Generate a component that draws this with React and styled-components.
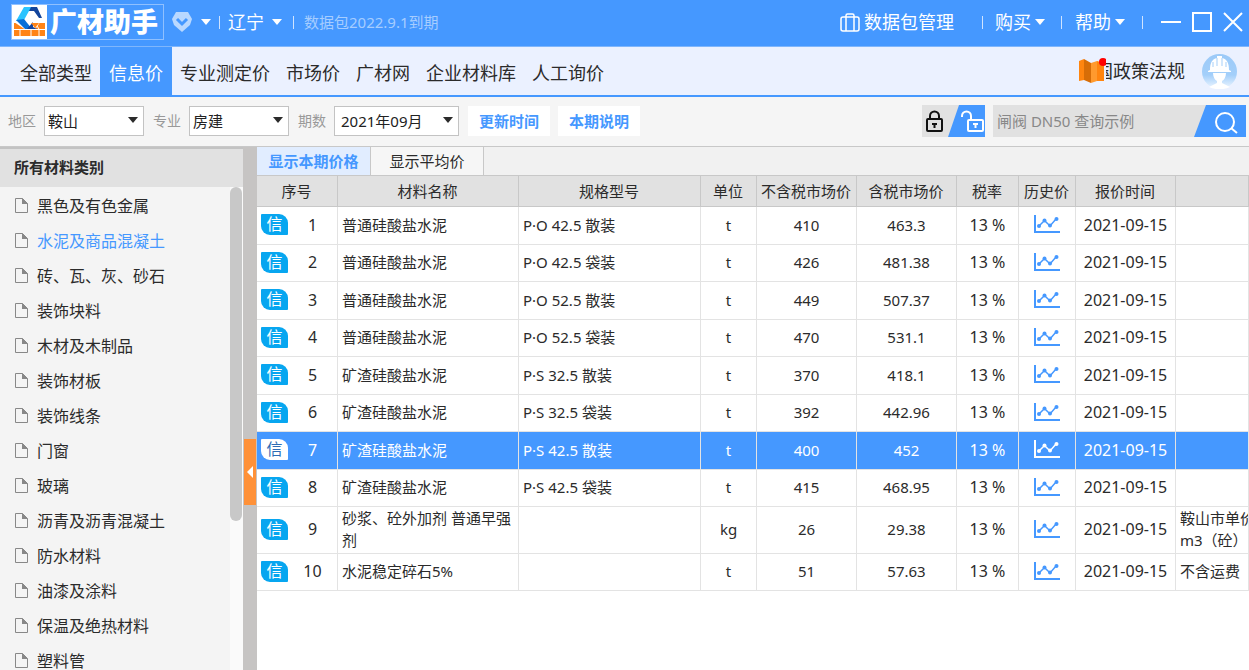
import React from 'react';
import styled, { createGlobalStyle, css } from 'styled-components';

const GlobalStyle = createGlobalStyle`
  * { box-sizing: border-box; }
  body {
    margin: 0;
    color: #2b2b2b;
    font: 15px/22px 'Noto Sans', 'Noto Sans CJK SC', sans-serif;
    overflow: hidden;
  }
  button, input, select {
    font: inherit;
    color: inherit;
    border: 0;
    padding: 0;
    background: none;
    outline: none;
  }
  button { cursor: pointer; }
  a { color: inherit; text-decoration: none; }
  svg { display: block; flex: none; }
`;

const Page = styled.div`
  height: 100vh;
  display: flex;
  flex-direction: column;
  background: #fff;
`;

// title bar
const TitleBar = styled.header`
  height: 47px;
  flex: none;
  display: flex;
  align-items: center;
  padding: 0 6px 2px 11px;
  color: #fff;
  background: #4598ff;
  border-bottom: 1px solid #7fb6fc;
`;

const Logo = styled.h1`
  display: flex;
  align-items: center;
  width: 153px;
  height: 36px;
  margin: 0 8px 0 0;
  border: 1px solid #8fc0ff;
  font-size: 27px;
  line-height: 34px;
  font-weight: 900;
  white-space: nowrap;
  svg { margin-right: 3px; }
`;

const BarButton = styled.button`
  display: flex;
  align-items: center;
  gap: ${({ $gap }) => $gap || 6}px;
  font-size: 18px;
  line-height: 24px;
  white-space: nowrap;
`;

const Separator = styled.i`
  width: 1px;
  height: 13px;
  margin: 0 ${({ $right }) => $right || 12}px 0 ${({ $left }) => $left || 8}px;
  background: #cfe3ff;
`;

const Expire = styled.span`
  color: #a6cdff;
  white-space: nowrap;
`;

const Spacer = styled.div`
  flex: 1;
`;

const WindowButtons = styled.div`
  display: flex;
  align-items: center;
  gap: 11px;
`;

// navigation
const NavBar = styled.nav`
  height: 50px;
  flex: none;
  display: flex;
  padding-right: 12px;
  background: #ebf1ff;
  border-bottom: 2px solid #4598ff;
`;

const NavItems = styled.ul`
  display: flex;
  margin: 0;
  padding: 0 0 0 12px;
  list-style: none;
`;

const NavLink = styled.a`
  display: block;
  height: 48px;
  padding: 0 ${({ $active }) => ($active ? 9 : 8)}px;
  font-size: 18px;
  line-height: 52px;
  white-space: nowrap;
  ${({ $active }) => $active && css`
    color: #fff;
    background: #4598ff;
  `}
`;

const PolicyLink = styled.a`
  display: flex;
  align-items: center;
  margin-right: 17px;
`;

const PolicyText = styled.span`
  display: flex;
  justify-content: flex-end;
  width: 79px;
  overflow: hidden;
  font-size: 18px;
  white-space: nowrap;
`;

const Avatar = styled.button`
  align-self: center;
`;

// filters
const FilterBar = styled.form`
  height: 50px;
  flex: none;
  display: flex;
  align-items: center;
  padding: 0 3px 1px 8px;
  background: #f5f5f5;
  border-bottom: 1px solid #c8c8c8;
`;

const FieldLabel = styled.label`
  margin-right: 8px;
  font-size: 14px;
  color: #999;
  white-space: nowrap;
`;

const SelectBox = styled.span`
  position: relative;
  width: ${({ $width }) => $width}px;
  margin-right: 9px;
  svg {
    position: absolute;
    right: 6px;
    top: 10px;
    pointer-events: none;
  }
`;

const Select = styled.select`
  appearance: none;
  display: block;
  width: 100%;
  height: 30px;
  padding-left: ${({ $pad }) => $pad || 3}px;
  line-height: 28px;
  color: #222;
  background: #fff;
  border: 1px solid #c3c3c3;
`;

const TextButton = styled.button`
  width: 82px;
  height: 30px;
  margin-right: 8px;
  font-weight: 700;
  color: #4598ff;
  background: #fff;
`;

const LockToggle = styled.div`
  display: flex;
  margin-right: 8px;
  background: #e1e1e1;
`;

const Search = styled.div`
  display: flex;
  height: 32px;
  background: #e1e1e1;
`;

const SearchInput = styled.input`
  width: 201px;
  padding-left: 4px;
  &::placeholder { color: #888; opacity: 1; }
`;

// body
const Body = styled.main`
  flex: 1;
  min-height: 0;
  display: flex;
`;

const Sidebar = styled.aside`
  width: 243px;
  flex: none;
  display: flex;
  flex-direction: column;
  background: #f4f4f4;
`;

const SidebarTitle = styled.h2`
  flex: none;
  height: 40px;
  margin: 0;
  padding-left: 14px;
  border-top: 2px solid #c3c3c3;
  font-size: 15px;
  line-height: 37px;
  font-weight: 700;
  background: #e1e1e1;
`;

const ListArea = styled.div`
  flex: 1;
  min-height: 0;
  display: flex;
  overflow: hidden;
`;

const CategoryList = styled.ul`
  flex: 1;
  margin: 0;
  padding: 1px 0 0 15px;
  list-style: none;
`;

const CategoryLink = styled.a`
  display: flex;
  align-items: center;
  gap: 9px;
  height: 35px;
  font-size: 16px;
  color: ${({ $active }) => ($active ? '#4598ff' : '#2b2b2b')};
  svg { color: #888; }
`;

const ScrollTrack = styled.div`
  width: 13px;
  padding-right: 1px;
  background: #fafafa;
`;

const ScrollThumb = styled.div`
  height: 334px;
  border-radius: 6px;
  background: #c8c8c8;
`;

const Divider = styled.div`
  width: 14px;
  flex: none;
  padding: 292px 1px 0 1px;
  background: #c6c4c3;
`;

const CollapseButton = styled.button`
  display: flex;
  align-items: center;
  justify-content: center;
  width: 12px;
  height: 66px;
  background: #ff9138;
`;

const Content = styled.section`
  flex: 1;
  min-width: 0;
  overflow: hidden;
`;

const Tabs = styled.div`
  display: flex;
  height: 28px;
  background: #f1f1f1;
`;

const Tab = styled.button`
  width: ${({ $active }) => ($active ? 114 : 113)}px;
  border-right: 1px solid #c8c8c8;
  background: #f6f6f6;
  ${({ $active }) => $active && css`
    font-weight: 700;
    color: #4598ff;
    background: #e1edff;
  `}
`;

const PriceTable = styled.table`
  width: 100%;
  table-layout: fixed;
  border-collapse: separate;
  border-spacing: 0;
`;

const Col = styled.col`
  width: ${({ $width }) => ($width ? `${$width}px` : 'auto')};
`;

const HeadCell = styled.th`
  height: 32px;
  padding: 0 1px 0 0;
  font-weight: 400;
  white-space: nowrap;
  background: #e1e1e1;
  border: solid #c8c8c8;
  border-width: 1px 1px 1px 0;
`;

const Cell = styled.td`
  padding: 0 ${({ $left }) => ($left ? 4 : 0)}px 2px;
  overflow: hidden;
  text-align: ${({ $left }) => ($left ? 'left' : 'center')};
  font-size: ${({ $large }) => ($large ? 16 : 15)}px;
  white-space: ${({ $nowrap }) => ($nowrap ? 'pre' : 'normal')};
  border: solid #e3e3e3;
  border-width: 0 1px 1px 0;
  svg { margin: 0 auto; }
`;

const Row = styled.tr`
  height: ${({ $height }) => $height}px;
  color: ${({ $active }) => ($active ? '#fff' : '#2b2b2b')};
  background: ${({ $active }) => ($active ? '#4598ff' : '#fff')};
`;

const Index = styled.div`
  display: flex;
  align-items: center;
  padding-left: 4px;
  span { flex: 1; }
`;

const Badge = styled.b`
  width: 27px;
  height: 21px;
  border-radius: 1px 9px 1px 9px;
  font-size: 16px;
  line-height: 21px;
  font-weight: 400;
  color: ${({ $active }) => ($active ? '#2c6cb5' : '#fff')};
  background: ${({ $active }) => ($active ? '#fff' : '#07a6f0')};
`;

const Arrow = () => (
  <svg width="10" height="8" viewBox="0 0 10 8"><path d="M0 1h10L5 7z" fill="currentColor" /></svg>
);

const LogoMark = () => (
  <svg width="35" height="34" viewBox="0 0 35 34">
    <path fill="#fff" d="M0 0h35v34H0z" />
    <path fill="#ff8417" d="M2 18h31v13H2z" />
    <path stroke="#fff" d="M2 24.500h31M8 25v6M19 25v6M27 25v6M27 18l-4 6M23 18l4 6" />
    <path fill="#fff" d="M2 17L12 1h13l6 13-5 4-5 7h-7l-9-6z" />
    <path fill="#2bc4ff" d="M12 2h11l-3 4h-3l-5 9-8 1z" />
    <path fill="#086fd8" d="M4 15l8-1 8 10h-7z" />
    <path fill="#14459c" d="M19 2h6l5 11h-3l-5-7h-5zM15 24l6-7v5l4 2z" />
    <path fill="#ff8417" d="M19 18h8l-4 5z" />
  </svg>
);

const Diamond = () => (
  <svg width="20" height="20" viewBox="0 0 20 20">
    <path d="M4 0h12l4 7-2 6-8 7-8-7-2-6z" fill="#b9d8ff" />
    <path d="M5 7l5 5 5-5" fill="none" stroke="#4598ff" strokeWidth="3" />
  </svg>
);

const Suitcase = () => (
  <svg width="20" height="19" viewBox="0 0 20 19" fill="none" stroke="#fff" strokeWidth="1.500">
    <rect x="1" y="4" width="18" height="14" rx="2" />
    <path d="M6 18V2.500Q6 1 7.500 1h5Q14 1 14 2.500V18" />
  </svg>
);

const Book = () => (
  <svg width="28" height="28" viewBox="0 0 28 28">
    <path d="M1 4l5-2v21l-5 1z" fill="#ff850f" />
    <path d="M6 2l7 4v20l-7-3z" fill="#d76d07" />
    <path d="M13 6l6-2v20l-6 2z" fill="#ff9a2e" />
    <path d="M19 4l7 2v18l-7 0z" fill="#ff850f" />
    <circle cx="25" cy="5" r="4" fill="#f00" />
  </svg>
);

const Worker = () => (
  <svg width="35" height="35" viewBox="0 0 35 35">
    <defs>
      <linearGradient id="sky" x1="0" y1="0" x2="0" y2="1">
        <stop offset="0" stopColor="#9ccaf8" />
        <stop offset=".6" stopColor="#a3cffa" />
        <stop offset="1" stopColor="#f0f7ff" />
      </linearGradient>
    </defs>
    <circle cx="17.500" cy="17.500" r="17.500" fill="url(#sky)" />
    <path d="M8 16c0-7 2-11 7-12V2h5v2c5 1 7 5 7 12l2 1v1H6v-1zM11 19h13c0 4-2 7-4 8v2l8 4c-6 3-15 3-21 0l8-4v-2c-2-1-4-4-4-8z" fill="#fff" />
    <path d="M15 4v8M20 4v8M11 8v5M24 8v5" stroke="#a5cff9" />
  </svg>
);

const Locks = () => (
  <svg width="63" height="32" viewBox="0 0 63 32">
    <path d="M37 0h26v32H26z" fill="#4598ff" />
    <g fill="none" stroke="#111" strokeWidth="2">
      <rect x="5" y="14" width="15" height="12" rx="1" />
      <path d="M8 14v-3a4.500 4.500 0 0 1 9 0v3" />
    </g>
    <path d="M10 18h5v2h-1.500v3h-2v-3H10z" fill="#111" />
    <g fill="none" stroke="#fff" strokeWidth="2">
      <rect x="46" y="15" width="15" height="11" rx="1" />
      <path d="M40 12v-1a4.500 4.500 0 0 1 9 0v4" />
    </g>
    <path d="M51 18h5v2h-1.500v3h-2v-3H51z" fill="#fff" />
  </svg>
);

const Magnifier = () => (
  <svg width="52" height="32" viewBox="0 0 52 32">
    <path d="M12 0h40v32H0z" fill="#4598ff" />
    <circle cx="31" cy="17" r="9" fill="none" stroke="#fff" strokeWidth="2" />
    <path d="M37 23l6 5" stroke="#fff" strokeWidth="2" />
  </svg>
);

const FileIcon = () => (
  <svg width="13" height="15" viewBox="0 0 13 15">
    <path d="M.5.5h7l5 5v9H.5z" fill="none" stroke="currentColor" />
    <path d="M7 0l6 6H7z" fill="currentColor" />
  </svg>
);

const Chart = ({ color }) => (
  <svg width="26" height="19" viewBox="0 0 26 19" fill="none" stroke={color} strokeWidth="2">
    <path d="M1 0v17h25" />
    <path d="M5 11l5.500-5.500 5.500 5.500 6-7" strokeWidth="1.500" />
    <g fill={color} stroke="none">
      <circle cx="5" cy="11" r="2" />
      <circle cx="10.500" cy="5.500" r="2" />
      <circle cx="16" cy="10.500" r="2" />
      <circle cx="22.500" cy="4" r="2" />
    </g>
  </svg>
);

const navItems = ['全部类型', '信息价', '专业测定价', '市场价', '广材网', '企业材料库', '人工询价'];

const categories = [
  '黑色及有色金属', '水泥及商品混凝土', '砖、瓦、灰、砂石', '装饰块料', '木材及木制品',
  '装饰材板', '装饰线条', '门窗', '玻璃', '沥青及沥青混凝土', '防水材料', '油漆及涂料',
  '保温及绝热材料', '塑料管',
];

const columns = [
  { label: '序号', width: 81 },
  { label: '材料名称', width: 181 },
  { label: '规格型号', width: 182 },
  { label: '单位', width: 56 },
  { label: '不含税市场价', width: 100 },
  { label: '含税市场价', width: 100 },
  { label: '税率', width: 62 },
  { label: '历史价', width: 57 },
  { label: '报价时间', width: 100 },
  { label: '' },
];

const rows = [
  { name: '普通硅酸盐水泥', spec: 'P·O 42.5 散装', unit: 't', net: '410', gross: '463.3', height: 38 },
  { name: '普通硅酸盐水泥', spec: 'P·O 42.5 袋装', unit: 't', net: '426', gross: '481.38', height: 37 },
  { name: '普通硅酸盐水泥', spec: 'P·O 52.5 散装', unit: 't', net: '449', gross: '507.37', height: 38 },
  { name: '普通硅酸盐水泥', spec: 'P·O 52.5 袋装', unit: 't', net: '470', gross: '531.1', height: 37 },
  { name: '矿渣硅酸盐水泥', spec: 'P·S 32.5 散装', unit: 't', net: '370', gross: '418.1', height: 38 },
  { name: '矿渣硅酸盐水泥', spec: 'P·S 32.5 袋装', unit: 't', net: '392', gross: '442.96', height: 37 },
  { name: '矿渣硅酸盐水泥', spec: 'P·S 42.5 散装', unit: 't', net: '400', gross: '452', height: 38, active: true },
  { name: '矿渣硅酸盐水泥', spec: 'P·S 42.5 袋装', unit: 't', net: '415', gross: '468.95', height: 37 },
  { name: '砂浆、砼外加剂 普通早强剂', spec: '', unit: 'kg', net: '26', gross: '29.38', height: 47, note: '鞍山市单价\nm3（砼）' },
  { name: '水泥稳定碎石5%', spec: '', unit: 't', net: '51', gross: '57.63', height: 37, note: '不含运费' },
];

const Header = () => (
  <TitleBar>
    <Logo><LogoMark />广材助手</Logo>
    <BarButton $gap={9} aria-label="会员"><Diamond /><Arrow /></BarButton>
    <Separator $right={8} />
    <BarButton $gap={8}>辽宁<Arrow /></BarButton>
    <Separator $left={11} $right={10} />
    <Expire>数据包2022.9.1到期</Expire>
    <Spacer />
    <BarButton $gap={4}><Suitcase />数据包管理</BarButton>
    <Separator $left={28} />
    <BarButton $gap={4}>购买<Arrow /></BarButton>
    <Separator $left={16} $right={13} />
    <BarButton $gap={4}>帮助<Arrow /></BarButton>
    <Separator $left={17} $right={18} />
    <WindowButtons>
      <button aria-label="最小化"><svg width="20" height="20"><path d="M0 10h20" stroke="#fff" strokeWidth="2" /></svg></button>
      <button aria-label="最大化"><svg width="20" height="20"><path d="M1 1h18v18H1z" fill="none" stroke="#fff" strokeWidth="2" /></svg></button>
      <button aria-label="关闭"><svg width="20" height="20"><path d="M1 1l18 18M19 1L1 19" stroke="#fff" strokeWidth="2" /></svg></button>
    </WindowButtons>
  </TitleBar>
);

const PrimaryNav = () => (
  <NavBar>
    <NavItems>
      {navItems.map((label, i) => (
        <li key={label}><NavLink href="#" $active={i === 1}>{label}</NavLink></li>
      ))}
    </NavItems>
    <Spacer />
    <PolicyLink href="#"><Book /><PolicyText>国政策法规</PolicyText></PolicyLink>
    <Avatar aria-label="用户"><Worker /></Avatar>
  </NavBar>
);

const Filters = () => (
  <FilterBar onSubmit={(e) => e.preventDefault()}>
    <FieldLabel htmlFor="area">地区</FieldLabel>
    <SelectBox $width={100}><Select id="area"><option>鞍山</option></Select><Arrow /></SelectBox>
    <FieldLabel htmlFor="major">专业</FieldLabel>
    <SelectBox $width={100}><Select id="major"><option>房建</option></Select><Arrow /></SelectBox>
    <FieldLabel htmlFor="period">期数</FieldLabel>
    <SelectBox $width={125}><Select id="period" $pad={6}><option>2021年09月</option></Select><Arrow /></SelectBox>
    <TextButton type="button">更新时间</TextButton>
    <TextButton type="button">本期说明</TextButton>
    <Spacer />
    <LockToggle><button type="button" aria-label="锁定"><Locks /></button></LockToggle>
    <Search>
      <SearchInput aria-label="搜索" placeholder="闸阀 DN50 查询示例" />
      <button type="submit" aria-label="查询"><Magnifier /></button>
    </Search>
  </FilterBar>
);

const Prices = () => (
  <PriceTable>
    <colgroup>
      {columns.map(({ label, width }) => <Col key={label} $width={width} />)}
    </colgroup>
    <thead>
      <tr>{columns.map(({ label }) => <HeadCell key={label}>{label}</HeadCell>)}</tr>
    </thead>
    <tbody>
      {rows.map(({ name, spec, unit, net, gross, height, note, active }, i) => (
        <Row key={i} $height={height} $active={active}>
          <Cell $large><Index><Badge $active={active}>信</Badge><span>{i + 1}</span></Index></Cell>
          <Cell $left>{name}</Cell>
          <Cell $left>{spec}</Cell>
          <Cell>{unit}</Cell>
          <Cell>{net}</Cell>
          <Cell>{gross}</Cell>
          <Cell $large>13 %</Cell>
          <Cell><Chart color={active ? '#fff' : '#4598ff'} /></Cell>
          <Cell $large>2021-09-15</Cell>
          <Cell $left $nowrap>{note}</Cell>
        </Row>
      ))}
    </tbody>
  </PriceTable>
);

const App = () => (
  <Page>
    <GlobalStyle />
    <Header />
    <PrimaryNav />
    <Filters />
    <Body>
      <Sidebar>
        <SidebarTitle>所有材料类别</SidebarTitle>
        <ListArea>
          <CategoryList>
            {categories.map((label, i) => (
              <li key={label}>
                <CategoryLink href="#" $active={i === 1}><FileIcon />{label}</CategoryLink>
              </li>
            ))}
          </CategoryList>
          <ScrollTrack><ScrollThumb /></ScrollTrack>
        </ListArea>
      </Sidebar>
      <Divider>
        <CollapseButton aria-label="收起">
          <svg width="6" height="12" viewBox="0 0 6 12"><path d="M6 0v12L0 6z" fill="#fff" /></svg>
        </CollapseButton>
      </Divider>
      <Content>
        <Tabs>
          <Tab $active>显示本期价格</Tab>
          <Tab>显示平均价</Tab>
        </Tabs>
        <Prices />
      </Content>
    </Body>
  </Page>
);

export default App;
